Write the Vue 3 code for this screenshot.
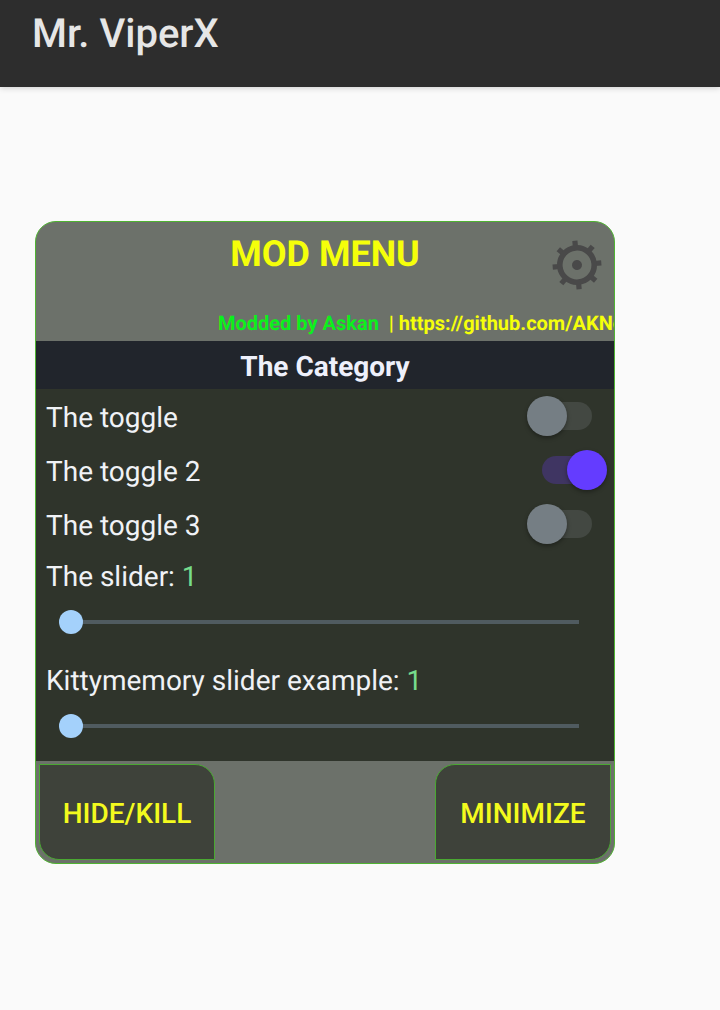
<script setup>
import { reactive } from 'vue'

const toggles = reactive([
  { id: 'toggle-1', label: 'The toggle', on: false },
  { id: 'toggle-2', label: 'The toggle 2', on: true },
  { id: 'toggle-3', label: 'The toggle 3', on: false },
])
const sliders = reactive([
  { id: 'slider-1', label: 'The slider:', value: 1 },
  { id: 'slider-2', label: 'Kittymemory slider example:', value: 1 },
])
const teeth = [0, 45, 90, 135, 180, 225, 270, 315]
</script>

<template>
  <div class="page">
    <header class="appbar">
      <h1>Mr. ViperX</h1>
    </header>
    <main class="content">
      <section class="menu">
        <div class="menu-head">
          <h2>MOD MENU</h2>
          <button class="settings" type="button" aria-label="Settings">
            <svg viewBox="0 0 50 50" width="50" height="50" aria-hidden="true">
              <g transform="rotate(-5 25 25)" fill="#494949">
                <rect v-for="a in teeth" :key="a" x="22.4" y="0.6" width="5.2" height="7" :transform="`rotate(${a} 25 25)`" />
                <circle cx="25" cy="25" r="17.2" fill="none" stroke="#494949" stroke-width="5.6" />
                <circle cx="25" cy="25" r="5" />
              </g>
            </svg>
          </button>
          <p class="credits"><span class="author">Modded by Askan</span>&nbsp; | https://github.com/AKNo</p>
        </div>
        <h3 class="category">The Category</h3>
        <div class="options">
          <div v-for="t in toggles" :key="t.id" class="toggle-row">
            <label :for="t.id">{{ t.label }}</label>
            <input :id="t.id" v-model="t.on" class="switch" type="checkbox" role="switch" />
          </div>
          <div v-for="s in sliders" :key="s.id" class="slider-row">
            <label :for="s.id">{{ s.label }} <span class="value">{{ s.value }}</span></label>
            <input :id="s.id" v-model.number="s.value" class="slider" type="range" min="1" max="100" />
          </div>
        </div>
        <footer class="actions">
          <button class="action hide" type="button">HIDE/KILL</button>
          <button class="action minimize" type="button">MINIMIZE</button>
        </footer>
      </section>
    </main>
  </div>
</template>

<style>
body {
  background: #fafafa;
}
</style>

<style scoped>
.page {
  font-family: Roboto, sans-serif;
  text-rendering: geometricPrecision;
  min-height: 100vh;
  background: #fafafa;
}
.appbar {
  background: #2d2d2d;
  padding: 10px 32px 29px;
  box-shadow: 0 1px 6px rgba(0, 0, 0, 0.18);
}
h1 {
  margin: 0;
  font-size: 40px;
  line-height: 48px;
  font-weight: 500;
  color: #e6e6e6;
}
.content {
  padding: 134px 105px 40px 35px;
}
.menu {
  border: 1px solid #4fb332;
  border-radius: 21px;
  overflow: hidden;
  background: #6c716a;
}
.menu-head {
  position: relative;
  padding: 10px 0 4px;
}
h2 {
  margin: 0;
  text-align: center;
  font-size: 36px;
  line-height: 44px;
  font-weight: 700;
  color: #f5ff0a;
}
.settings {
  position: absolute;
  top: 18px;
  right: 12px;
  padding: 0;
  border: 0;
  background: none;
  cursor: pointer;
}
.settings svg {
  display: block;
}
.credits {
  margin: 33px 0 0;
  padding-left: 182px;
  font-size: 20px;
  line-height: 28px;
  font-weight: 700;
  white-space: nowrap;
  overflow: hidden;
  color: #f5ff0a;
}
.author {
  color: #0cf01c;
}
.category {
  margin: 0;
  background: #21252c;
  text-align: center;
  font-size: 28px;
  line-height: 44px;
  padding-top: 4px;
  font-weight: 700;
  color: #eef0fb;
}
.options {
  background: #2f342b;
  color: #f0f2f6;
  font-size: 28px;
  padding-bottom: 2px;
}
.toggle-row {
  display: flex;
  align-items: center;
  justify-content: space-between;
  height: 54px;
  padding: 0 7px 0 10px;
}
.toggle-row label {
  padding-top: 2px;
}
.switch {
  appearance: none;
  position: relative;
  width: 80px;
  height: 40px;
  margin: 0;
  cursor: pointer;
}
.switch::before {
  content: '';
  position: absolute;
  inset: 6px 15px;
  border-radius: 14px;
  background: #434842;
}
.switch::after {
  content: '';
  position: absolute;
  top: 0;
  left: 0;
  width: 40px;
  height: 40px;
  border-radius: 50%;
  background: #757e84;
  box-shadow: 0 2px 4px rgba(0, 0, 0, 0.35);
}
.switch:checked::before {
  background: #3f3562;
}
.switch:checked::after {
  left: 40px;
  background: #643cff;
}
.slider-row {
  display: flex;
  flex-direction: column;
  height: 104px;
}
.slider-row label {
  padding: 9px 10px 0;
  line-height: 34px;
}
.value {
  color: #76dc8c;
}
.slider {
  appearance: none;
  margin: 16px 23px 0;
  height: 24px;
  background: linear-gradient(#505b60, #505b60) center / calc(100% - 24px) 4px no-repeat;
  cursor: pointer;
}
.slider::-webkit-slider-thumb {
  appearance: none;
  width: 24px;
  height: 24px;
  border-radius: 50%;
  background: #a4d1fb;
}
.actions {
  display: flex;
  justify-content: space-between;
  padding: 3px;
}
.action {
  width: 176px;
  height: 96px;
  padding: 2px 0 0;
  border: 1px solid #4aa832;
  background: #3e423a;
  font-family: inherit;
  text-rendering: inherit;
  font-size: 28px;
  font-weight: 500;
  color: #f3fa1e;
  cursor: pointer;
}
.hide {
  border-radius: 0 20px 0 20px;
}
.minimize {
  border-radius: 20px 0 20px 0;
}
</style>
